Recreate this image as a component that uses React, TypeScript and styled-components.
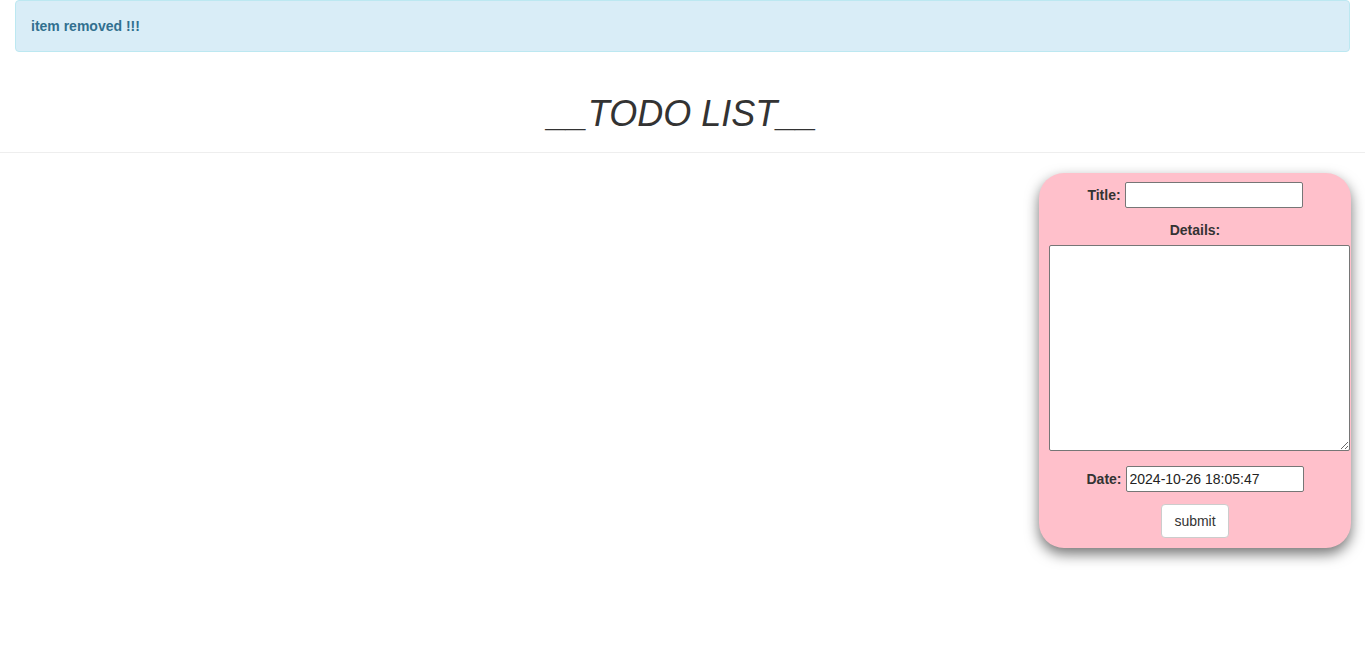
import React from "react";
import styled, { createGlobalStyle } from "styled-components";

const Global = createGlobalStyle`
  html, body { margin: 0; padding: 0; background: #fff; }
  body {
    font-family: "Liberation Sans", Arial, Helvetica, sans-serif;
    font-size: 14px;
    line-height: 1.42857;
    color: #333;
  }
  * { box-sizing: border-box; }
`;

const Page = styled.div`
  display: flex;
  flex-direction: column;
  min-height: 100vh;
`;

const Alert = styled.div`
  margin: 0 15px;
  padding: 15px;
  border: 1px solid #bce8f1;
  border-radius: 4px;
  background: #d9edf7;
  color: #31708f;
  font-weight: bold;
  line-height: 20px;
`;

const Header = styled.h1`
  margin: 42px 0 0;
  font-size: 36px;
  font-weight: 500;
  font-style: italic;
  line-height: 39.6px;
  text-align: center;
  color: #333;
`;

const Rule = styled.hr`
  margin: 18px 0 20px;
  border: 0;
  border-top: 1px solid #eee;
  height: 0;
`;

const Main = styled.div`
  display: flex;
  justify-content: flex-end;
  padding: 0 14px 0 15px;
`;

const Card = styled.form`
  width: 312px;
  padding: 9px 10px 10px;
  background: #ffc0cb;
  border-radius: 25px;
  box-shadow: 0 6px 14px rgba(0, 0, 0, 0.55);
  display: flex;
  flex-direction: column;
  align-items: center;
`;

const Row = styled.div<{ $mt?: number }>`
  display: flex;
  align-items: center;
  justify-content: center;
  gap: 4px;
  margin-top: ${(p) => p.$mt ?? 0}px;
  width: 100%;
`;

const Label = styled.label`
  padding-top: 2px;
  font-weight: bold;
  font-size: 14px;
  color: #333;
`;

const TextInput = styled.input`
  width: 178px;
  height: 26px;
  padding: 1px 3px;
  border: 1px solid #767676;
  border-radius: 2px;
  font-family: "Liberation Sans", Arial, sans-serif;
  font-size: 14px;
  color: #222;
  background: #fff;
`;

const Area = styled.textarea`
  align-self: flex-start;
  margin-top: 4px;
  width: 301px;
  height: 206px;
  flex-shrink: 0;
  border: 1px solid #767676;
  border-radius: 2px;
  background: #fff;
  font-family: "Liberation Mono", monospace;
`;

const Button = styled.button`
  margin-top: 12px;
  padding: 6px 12px;
  height: 34px;
  background: #fff;
  border: 1px solid #ccc;
  border-radius: 4px;
  font-family: "Liberation Sans", Arial, sans-serif;
  font-size: 14px;
  line-height: 20px;
  color: #333;
`;

export default function App() {
  return (
    <Page>
      <Global />
      <Alert>item removed !!!</Alert>
      <Header>__TODO LIST__</Header>
      <Rule />
      <Main>
        <Card onSubmit={(e) => e.preventDefault()}>
          <Row>
            <Label>Title:</Label>
            <TextInput type="text" />
          </Row>
          <Row $mt={11}>
            <Label>Details:</Label>
          </Row>
          <Area />
          <Row $mt={15}>
            <Label>Date:</Label>
            <TextInput type="text" defaultValue="2024-10-26 18:05:47" />
          </Row>
          <Button type="submit">submit</Button>
        </Card>
      </Main>
    </Page>
  );
}
